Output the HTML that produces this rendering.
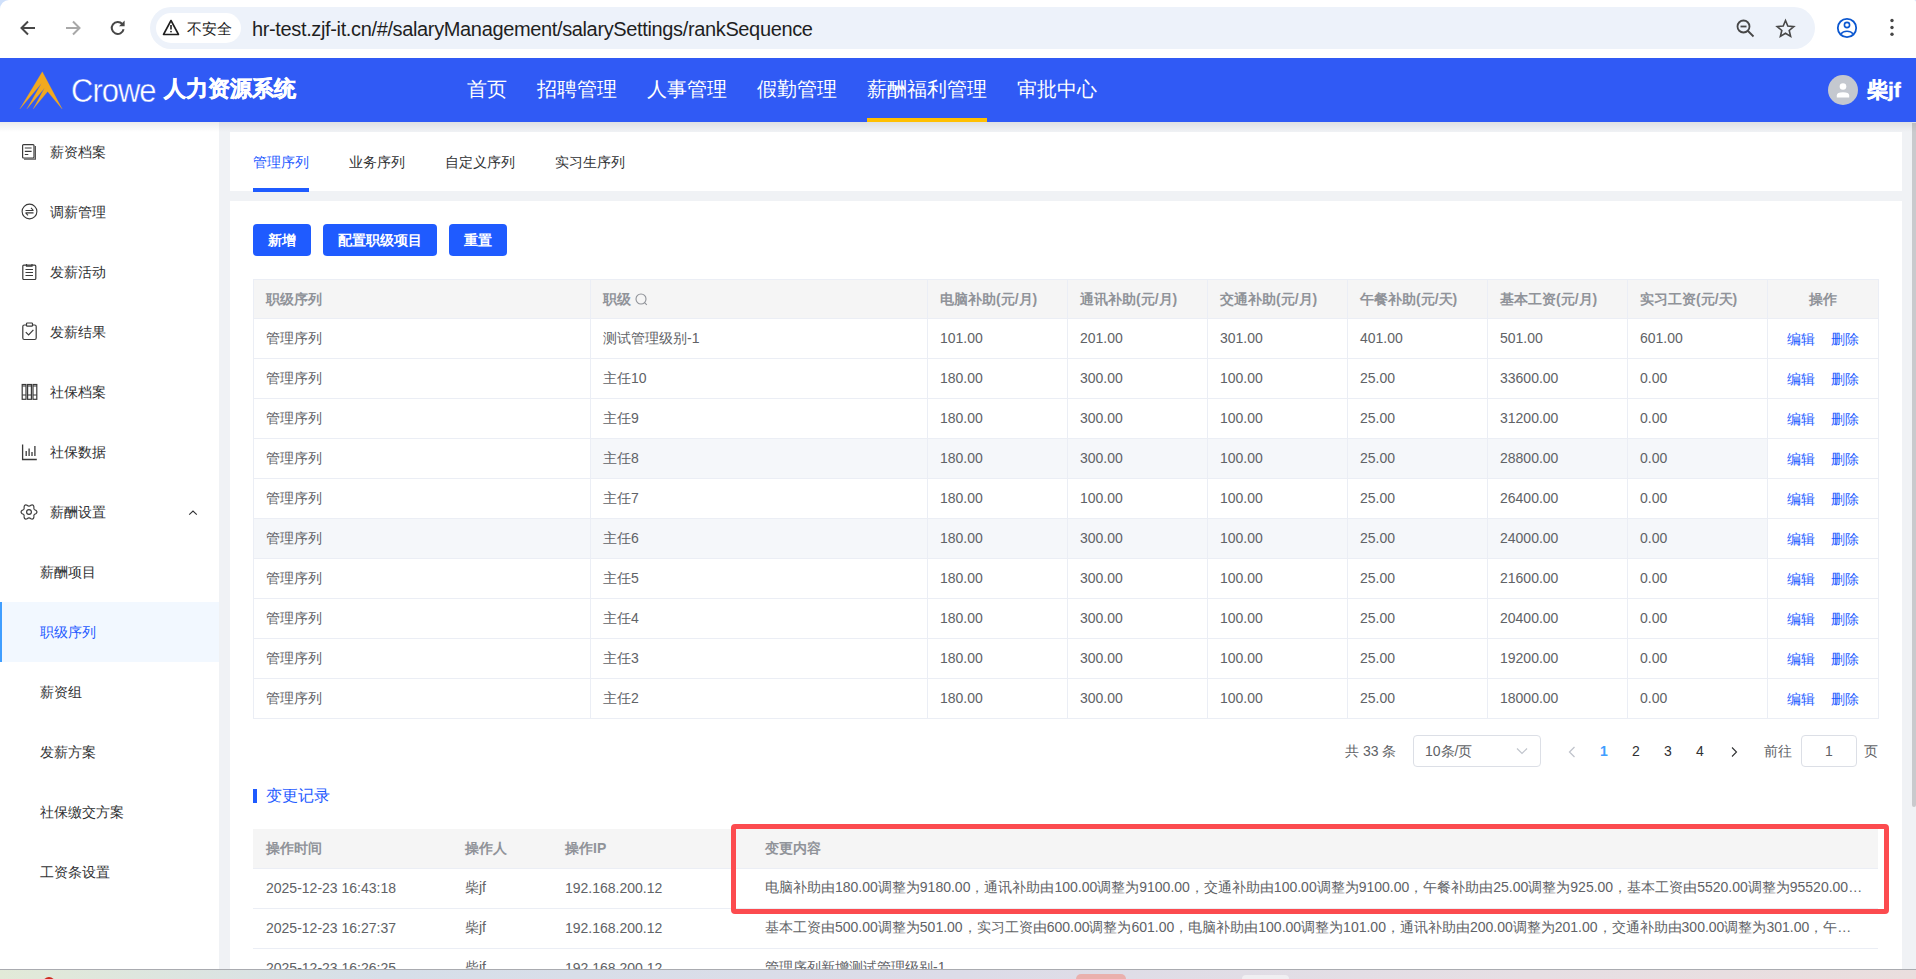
<!DOCTYPE html>
<html><head><meta charset="utf-8">
<style>
*{box-sizing:border-box;margin:0;padding:0}
html,body{width:1916px;height:979px;overflow:hidden;background:#f0f2f5;font-family:"Liberation Sans",sans-serif;font-size:14px;color:#606266}
.abs{position:absolute}
#chrome{position:absolute;left:0;top:0;width:1916px;height:58px;background:#fff;border-top-left-radius:9px;border-top-right-radius:2px}
#pill{position:absolute;left:150px;top:7px;width:1665px;height:42px;border-radius:21px;background:#edf2fa}
#chip{position:absolute;left:6px;top:6px;width:85px;height:30px;border-radius:15px;background:#fff}
#url{position:absolute;left:102px;top:1px;line-height:42px;font-size:20px;color:#1f1f1f;letter-spacing:-0.36px}
#header{position:absolute;left:0;top:58px;width:1916px;height:64px;background:#305af5}
.nav{position:absolute;top:0;height:64px;line-height:62px;font-size:20px;color:#fff}
#sidebar{position:absolute;left:0;top:122px;width:219px;height:857px;background:#fff}
.mi{position:absolute;left:0;width:219px;height:60px;line-height:60px;font-size:14px;color:#303133}
.mi .t{position:absolute;left:50px;top:0}
.mi svg{position:absolute;left:20px;top:22px}
.si{position:absolute;left:0;width:219px;height:60px;line-height:60px;font-size:14px;color:#303133}
.si .t{position:absolute;left:40px;top:0}
#tabs{position:absolute;left:230px;top:132px;width:1672px;height:59px;background:#fff;z-index:1}
.tab{position:absolute;top:0;height:59px;line-height:60px;font-size:14px;color:#303133}
#card{position:absolute;left:230px;top:201px;width:1672px;height:778px;background:#fff}
.btn{position:absolute;top:23px;height:32px;line-height:32px;background:#1f5bff;color:#fff;border-radius:4px;font-size:14px;text-align:center;font-weight:bold}
table{border-collapse:collapse;table-layout:fixed}
#scroll{position:absolute;left:1912px;top:123px;width:4px;height:684px;background:#c9cacd;border-radius:0 0 2px 2px}
#taskbar{position:absolute;left:0;top:969px;width:1916px;height:10px;background:linear-gradient(90deg,#e2ead8 0%,#d6dfe9 20%,#dcdce8 50%,#e6dfe4 80%,#eadede 100%);border-top:1px solid #a9abb0}
#mt th,#mt td,#ct th,#ct td{height:40px;padding:0 12px;text-align:left;font-size:14px;white-space:nowrap;overflow:hidden;text-overflow:ellipsis;position:relative}
#mt{border-left:1px solid #ebeef5;border-top:1px solid #ebeef5}
#mt th,#mt td{border-right:1px solid #ebeef5;border-bottom:1px solid #ebeef5}
#mt th,#ct th{background:#f5f5f5;color:#909399;font-weight:bold;height:39px;padding-top:1px}
#mt td{color:#606266}
#mt td.op{text-align:center;padding:0}
#mt td.op a{color:#1d5bff;margin:0 8px;position:relative;top:1px}
#mt tr.r3 td{background:#f5f7fa}
#mt tr.r3 td:first-child{background:#fff}
#mt tr.r5 td{background:#f5f7fa}
#mt tr td.op{background:#fff !important}
#ct th,#ct td{border-bottom:1px solid #ebeef5;padding-left:13px}
#ct td{color:#606266}
.n{position:relative;top:-1px}
.pg{position:absolute;top:536px;width:32px;text-align:center;line-height:28px;font-size:14px;color:#303133}
</style></head><body>
<div class="abs" style="left:0;top:0;width:14px;height:14px;background:#cfe0fb"></div><div class="abs" style="left:1906px;top:0;width:10px;height:6px;background:#cfe0fb"></div>
<div id="chrome">
  <!-- back -->
  <svg class="abs" style="left:18px;top:17px" width="20" height="22" viewBox="0 0 20 22"><path d="M17 11H4M10 4.5L3.5 11 10 17.5" fill="none" stroke="#474747" stroke-width="2"/></svg>
  <svg class="abs" style="left:63px;top:17px" width="20" height="22" viewBox="0 0 20 22"><path d="M3 11h13M10 4.5L16.5 11 10 17.5" fill="none" stroke="#a8a8a8" stroke-width="2"/></svg>
  <svg class="abs" style="left:108px;top:18px" width="20" height="20" viewBox="0 0 20 20"><path d="M15.6 11.2A6 6 0 1 1 14.3 6" fill="none" stroke="#474747" stroke-width="2"/><path d="M16.6 2.6v5.6H11z" fill="#474747"/></svg>
  <div id="pill">
    <div id="chip">
      <svg class="abs" style="left:6px;top:6px" width="18" height="17" viewBox="0 0 18 17"><path d="M9 1.5L16.5 15.5H1.5Z" fill="none" stroke="#1f1f1f" stroke-width="1.6" stroke-linejoin="round"/><path d="M9 6v4.5" stroke="#1f1f1f" stroke-width="1.6"/><circle cx="9" cy="12.6" r="0.9" fill="#1f1f1f"/></svg>
      <span class="abs" style="left:31px;top:1px;line-height:30px;font-size:15px;color:#1f1f1f">不安全</span>
    </div>
    <div id="url">hr-test.zjf-it.cn/#/salaryManagement/salarySettings/rankSequence</div>
  </div>
  <svg class="abs" style="left:1735px;top:18px" width="22" height="22" viewBox="0 0 22 22"><circle cx="8.5" cy="8.5" r="6" fill="none" stroke="#474747" stroke-width="1.8"/><path d="M5.5 8.5h6" stroke="#474747" stroke-width="1.8"/><path d="M13 13l5.5 5.5" stroke="#474747" stroke-width="1.8"/></svg>
  <svg class="abs" style="left:1775px;top:18px" width="22" height="22" viewBox="0 0 22 22"><path d="M10.5 2.5l2.3 5.6 6 .5-4.6 3.9 1.4 5.9-5.1-3.2-5.1 3.2 1.4-5.9-4.6-3.9 6-.5z" fill="none" stroke="#474747" stroke-width="1.6" stroke-linejoin="miter"/></svg>
  <svg class="abs" style="left:1836px;top:17px" width="22" height="22" viewBox="0 0 22 22"><circle cx="11" cy="11" r="9.2" fill="none" stroke="#0b57d0" stroke-width="1.8"/><circle cx="11" cy="8" r="2.6" fill="none" stroke="#0b57d0" stroke-width="1.6"/><path d="M5 16.8c1.5-2 3.5-2.6 6-2.6s4.5.6 6 2.6" fill="none" stroke="#0b57d0" stroke-width="1.6"/></svg>
  <svg class="abs" style="left:1888px;top:17px" width="8" height="22" viewBox="0 0 8 22"><circle cx="4" cy="3.5" r="1.7" fill="#474747"/><circle cx="4" cy="10.5" r="1.7" fill="#474747"/><circle cx="4" cy="17.3" r="1.7" fill="#474747"/></svg>
</div>
<div id="header">
  <svg class="abs" style="left:15px;top:7px" width="55" height="50" viewBox="0 0 55 50"><path d="M27.3 6.8L47 43.8L32.6 26.4L18.3 43.8L29.6 23L12 43.8L26.6 18.3L5 43.8Z" fill="#f2a91f" stroke="#f2a91f" stroke-width="0.3" stroke-linejoin="round"/></svg>
  <div class="abs" style="left:71px;top:2px;line-height:64px;font-size:31px;color:#fff;letter-spacing:-1px;-webkit-text-stroke:0.4px #305af5;transform:scaleY(1.1);transform-origin:0 40px">Crowe</div>
  <div class="abs" style="left:164px;top:0;line-height:62px;font-size:22px;color:#fff;font-weight:bold;-webkit-text-stroke:0.5px #fff">人力资源系统</div>
  <div class="nav" style="left:467px">首页</div>
  <div class="nav" style="left:537px">招聘管理</div>
  <div class="nav" style="left:647px">人事管理</div>
  <div class="nav" style="left:757px">假勤管理</div>
  <div class="nav" style="left:867px">薪酬福利管理</div>
  <div class="abs" style="left:867px;top:60px;width:120px;height:4px;background:#ffbf00"></div>
  <div class="nav" style="left:1017px">审批中心</div>
  <div class="abs" style="left:1828px;top:17px;width:30px;height:30px;border-radius:15px;background:#c4c8cf"></div>
  <svg class="abs" style="left:1828px;top:17px" width="30" height="30" viewBox="0 0 30 30"><circle cx="15" cy="11.5" r="3.3" fill="#fff"/><path d="M8.8 22.6v-2.2c0-2 2.2-3.2 6.2-3.2s6.2 1.2 6.2 3.2v2.2z" fill="#fff"/></svg>
  <div class="abs" style="left:1867px;top:1px;line-height:62px;font-size:21px;color:#fff;font-weight:bold;-webkit-text-stroke:0.4px #fff">柴jf</div>
</div>
<div id="sidebar">
  <div class="mi" style="top:0"><svg style="left:21px;top:21px" width="17" height="18" viewBox="0 0 17 18"><rect x="1.6" y="1.6" width="11.4" height="13.4" rx="1" fill="none" stroke="#3a3a3a" stroke-width="1.2"/><path d="M14.4 3v13.2H3" fill="none" stroke="#555" stroke-width="1.2"/><path d="M3.8 5h6.8M3.8 8.3h6.8M3.8 11.5h3.5" stroke="#3a3a3a" stroke-width="1.2"/></svg><span class="t">薪资档案</span></div>
  <div class="mi" style="top:60px"><svg style="left:20.5px;top:21.3px" width="17" height="17" viewBox="0 0 17 17"><circle cx="8.5" cy="8.5" r="7.4" fill="none" stroke="#3a3a3a" stroke-width="1.1"/><path d="M4.5 7.5h8M10 4.8l2.4 2.7M12.5 9.9h-8M4.6 9.9l2.4 2.4" fill="none" stroke="#3a3a3a" stroke-width="1.1"/></svg><span class="t">调薪管理</span></div>
  <div class="mi" style="top:120px"><svg style="left:21px;top:21px" width="17" height="18" viewBox="0 0 17 18"><rect x="1.8" y="2.2" width="13" height="14.3" rx="1" fill="none" stroke="#3a3a3a" stroke-width="1.2"/><path d="M5.5 1v2.2h5.5V1" fill="none" stroke="#3a3a3a" stroke-width="1.2"/><path d="M4.5 6.5h7.5M4.5 9.5h7.5M4.5 12.5h7.5" stroke="#3a3a3a" stroke-width="1.2"/></svg><span class="t">发薪活动</span></div>
  <div class="mi" style="top:180px"><svg style="left:21px;top:20px" width="17" height="19" viewBox="0 0 17 19"><rect x="1.8" y="3" width="13.4" height="14.5" rx="1.5" fill="none" stroke="#3a3a3a" stroke-width="1.2"/><rect x="5.5" y="1" width="6" height="3.2" rx="0.8" fill="#fff" stroke="#3a3a3a" stroke-width="1.2"/><path d="M4.8 10.2l2.8 2.8 4.8-5.2" fill="none" stroke="#3a3a3a" stroke-width="1.2"/></svg><span class="t">发薪结果</span></div>
  <div class="mi" style="top:240px"><svg style="left:21px;top:21px" width="17" height="18" viewBox="0 0 17 18"><rect x="1.2" y="1.5" width="3.8" height="14.8" fill="none" stroke="#3a3a3a" stroke-width="1.2"/><rect x="6.6" y="1.5" width="3.8" height="14.8" fill="none" stroke="#3a3a3a" stroke-width="1.2"/><rect x="12" y="1.5" width="3.8" height="14.8" fill="none" stroke="#3a3a3a" stroke-width="1.2"/><path d="M1.2 3h3.8M1.2 12h3.8M6.6 3h3.8M6.6 12h3.8M12 3h3.8M12 12h3.8" stroke="#3a3a3a" stroke-width="1.1"/></svg><span class="t">社保档案</span></div>
  <div class="mi" style="top:300px"><svg style="left:21px;top:21px" width="17" height="18" viewBox="0 0 17 18"><path d="M1.6 1.5v15h14.2" fill="none" stroke="#3a3a3a" stroke-width="1.3"/><path d="M5.2 13V8M8.1 13V5.5M11 13V9M13.9 13V3" stroke="#3a3a3a" stroke-width="1.3"/></svg><span class="t">社保数据</span></div>
  <div class="mi" style="top:360px"><svg style="left:20px;top:20.5px" width="18" height="18" viewBox="0 0 18 18"><path d="M16.95 9.00 L16.85 8.49 L16.58 8.00 L16.16 7.58 L15.66 7.21 L15.15 6.91 L14.69 6.64 L14.32 6.38 L14.07 6.08 L13.93 5.71 L13.89 5.25 L13.89 4.72 L13.88 4.12 L13.81 3.51 L13.65 2.94 L13.37 2.46 L12.98 2.12 L12.48 1.94 L11.92 1.94 L11.35 2.09 L10.79 2.34 L10.27 2.63 L9.80 2.90 L9.39 3.08 L9.00 3.15 L8.61 3.08 L8.20 2.90 L7.73 2.63 L7.21 2.34 L6.65 2.09 L6.08 1.94 L5.52 1.94 L5.03 2.12 L4.63 2.46 L4.35 2.94 L4.19 3.51 L4.12 4.12 L4.11 4.72 L4.11 5.25 L4.07 5.71 L3.93 6.08 L3.68 6.38 L3.31 6.64 L2.85 6.91 L2.34 7.21 L1.84 7.58 L1.42 8.00 L1.15 8.49 L1.05 9.00 L1.15 9.51 L1.42 10.00 L1.84 10.42 L2.34 10.79 L2.85 11.09 L3.31 11.36 L3.68 11.62 L3.93 11.92 L4.07 12.29 L4.11 12.75 L4.11 13.28 L4.12 13.88 L4.19 14.49 L4.35 15.06 L4.63 15.54 L5.02 15.88 L5.52 16.06 L6.08 16.06 L6.65 15.91 L7.21 15.66 L7.73 15.37 L8.20 15.10 L8.61 14.92 L9.00 14.85 L9.39 14.92 L9.80 15.10 L10.27 15.37 L10.79 15.66 L11.35 15.91 L11.92 16.06 L12.48 16.06 L12.98 15.88 L13.37 15.54 L13.65 15.06 L13.81 14.49 L13.88 13.88 L13.89 13.28 L13.89 12.75 L13.93 12.29 L14.07 11.93 L14.32 11.62 L14.69 11.36 L15.15 11.09 L15.66 10.79 L16.16 10.42 L16.58 10.00 L16.85 9.51Z" fill="none" stroke="#3a3a3a" stroke-width="1.15" stroke-linejoin="round"/><circle cx="9" cy="9" r="2.4" fill="none" stroke="#3a3a3a" stroke-width="1.15"/></svg><span class="t">薪酬设置</span>
    <svg style="left:187px;top:26.5px" width="12" height="8" viewBox="0 0 12 8"><path d="M2.2 5.6L6 2l3.8 3.6" fill="none" stroke="#303133" stroke-width="1.1"/></svg></div>
  <div class="si" style="top:420px"><span class="t">薪酬项目</span></div>
  <div class="si" style="top:480px;background:#f2f8ff"><div style="position:absolute;left:0;top:0;width:2px;height:60px;background:#409eff"></div><span class="t" style="color:#1f5bff">职级序列</span></div>
  <div class="si" style="top:540px"><span class="t">薪资组</span></div>
  <div class="si" style="top:600px"><span class="t">发薪方案</span></div>
  <div class="si" style="top:660px"><span class="t">社保缴交方案</span></div>
  <div class="si" style="top:720px"><span class="t">工资条设置</span></div>
</div>
<div id="tabs">
  <div class="tab" style="left:23px;color:#1f5bff">管理序列</div>
  <div class="abs" style="left:23px;top:56px;width:56px;height:4px;background:#1f5bff"></div>
  <div class="tab" style="left:119px">业务序列</div>
  <div class="tab" style="left:215px">自定义序列</div>
  <div class="tab" style="left:325px">实习生序列</div>
</div>
<div id="card">
  <div class="btn" style="left:23px;width:58px">新增</div>
  <div class="btn" style="left:93px;width:114px">配置职级项目</div>
  <div class="btn" style="left:219px;width:58px">重置</div>
<table id="mt" style="position:absolute;left:23px;top:78px;width:1625px">
<colgroup>
<col style="width:337px">
<col style="width:337px">
<col style="width:140px">
<col style="width:140px">
<col style="width:140px">
<col style="width:140px">
<col style="width:140px">
<col style="width:140px">
<col style="width:111px">
</colgroup><tr class="h">
<th>职级序列</th>
<th>职级<svg style="position:absolute;left:44px;top:13px" width="13" height="13" viewBox="0 0 13 13"><circle cx="6" cy="6" r="5" fill="none" stroke="#909399" stroke-width="1.1"/><path d="M9.6 9.6l2.2 2.2" stroke="#909399" stroke-width="1.1"/></svg></th>
<th>电脑补助(元/月)</th>
<th>通讯补助(元/月)</th>
<th>交通补助(元/月)</th>
<th>午餐补助(元/天)</th>
<th>基本工资(元/月)</th>
<th>实习工资(元/天)</th>
<th style="text-align:center">操作</th>
</tr>
<tr class="r0">
<td>管理序列</td>
<td>测试管理级别-1</td>
<td><span class="n">101.00</span></td>
<td><span class="n">201.00</span></td>
<td><span class="n">301.00</span></td>
<td><span class="n">401.00</span></td>
<td><span class="n">501.00</span></td>
<td><span class="n">601.00</span></td>
<td class="op"><a>编辑</a><a>删除</a></td></tr>
<tr class="r1">
<td>管理序列</td>
<td>主任10</td>
<td><span class="n">180.00</span></td>
<td><span class="n">300.00</span></td>
<td><span class="n">100.00</span></td>
<td><span class="n">25.00</span></td>
<td><span class="n">33600.00</span></td>
<td><span class="n">0.00</span></td>
<td class="op"><a>编辑</a><a>删除</a></td></tr>
<tr class="r2">
<td>管理序列</td>
<td>主任9</td>
<td><span class="n">180.00</span></td>
<td><span class="n">300.00</span></td>
<td><span class="n">100.00</span></td>
<td><span class="n">25.00</span></td>
<td><span class="n">31200.00</span></td>
<td><span class="n">0.00</span></td>
<td class="op"><a>编辑</a><a>删除</a></td></tr>
<tr class="r3">
<td>管理序列</td>
<td>主任8</td>
<td><span class="n">180.00</span></td>
<td><span class="n">300.00</span></td>
<td><span class="n">100.00</span></td>
<td><span class="n">25.00</span></td>
<td><span class="n">28800.00</span></td>
<td><span class="n">0.00</span></td>
<td class="op"><a>编辑</a><a>删除</a></td></tr>
<tr class="r4">
<td>管理序列</td>
<td>主任7</td>
<td><span class="n">180.00</span></td>
<td><span class="n">100.00</span></td>
<td><span class="n">100.00</span></td>
<td><span class="n">25.00</span></td>
<td><span class="n">26400.00</span></td>
<td><span class="n">0.00</span></td>
<td class="op"><a>编辑</a><a>删除</a></td></tr>
<tr class="r5">
<td>管理序列</td>
<td>主任6</td>
<td><span class="n">180.00</span></td>
<td><span class="n">300.00</span></td>
<td><span class="n">100.00</span></td>
<td><span class="n">25.00</span></td>
<td><span class="n">24000.00</span></td>
<td><span class="n">0.00</span></td>
<td class="op"><a>编辑</a><a>删除</a></td></tr>
<tr class="r6">
<td>管理序列</td>
<td>主任5</td>
<td><span class="n">180.00</span></td>
<td><span class="n">300.00</span></td>
<td><span class="n">100.00</span></td>
<td><span class="n">25.00</span></td>
<td><span class="n">21600.00</span></td>
<td><span class="n">0.00</span></td>
<td class="op"><a>编辑</a><a>删除</a></td></tr>
<tr class="r7">
<td>管理序列</td>
<td>主任4</td>
<td><span class="n">180.00</span></td>
<td><span class="n">300.00</span></td>
<td><span class="n">100.00</span></td>
<td><span class="n">25.00</span></td>
<td><span class="n">20400.00</span></td>
<td><span class="n">0.00</span></td>
<td class="op"><a>编辑</a><a>删除</a></td></tr>
<tr class="r8">
<td>管理序列</td>
<td>主任3</td>
<td><span class="n">180.00</span></td>
<td><span class="n">300.00</span></td>
<td><span class="n">100.00</span></td>
<td><span class="n">25.00</span></td>
<td><span class="n">19200.00</span></td>
<td><span class="n">0.00</span></td>
<td class="op"><a>编辑</a><a>删除</a></td></tr>
<tr class="r9">
<td>管理序列</td>
<td>主任2</td>
<td><span class="n">180.00</span></td>
<td><span class="n">300.00</span></td>
<td><span class="n">100.00</span></td>
<td><span class="n">25.00</span></td>
<td><span class="n">18000.00</span></td>
<td><span class="n">0.00</span></td>
<td class="op"><a>编辑</a><a>删除</a></td></tr>
</table>
<div class="abs" style="left:1115px;top:536px;line-height:28px;font-size:14px;color:#606266">共 33 条</div>
  <div class="abs" style="left:1183px;top:534px;width:128px;height:32px;border:1px solid #dcdfe6;border-radius:4px">
    <span class="abs" style="left:11px;top:0;line-height:30px;font-size:14px;color:#606266">10条/页</span>
    <svg class="abs" style="left:102px;top:11px" width="12" height="8" viewBox="0 0 12 8"><path d="M1 1.5l5 5 5-5" fill="none" stroke="#c0c4cc" stroke-width="1.2"/></svg>
  </div>
  <svg class="abs" style="left:1338px;top:545px" width="8" height="12" viewBox="0 0 8 12"><path d="M6.5 1L1.5 6l5 5" fill="none" stroke="#c0c4cc" stroke-width="1.3"/></svg>
  <div class="pg" style="left:1358px;color:#409eff;font-weight:bold">1</div>
  <div class="pg" style="left:1390px">2</div>
  <div class="pg" style="left:1422px">3</div>
  <div class="pg" style="left:1454px">4</div>
  <svg class="abs" style="left:1500px;top:545px" width="8" height="12" viewBox="0 0 8 12"><path d="M2 1.5l4.5 4.5-4.5 4.5" fill="none" stroke="#303133" stroke-width="1.1"/></svg>
  <div class="abs" style="left:1534px;top:536px;line-height:28px;font-size:14px;color:#606266">前往</div>
  <div class="abs" style="left:1571px;top:534px;width:56px;height:32px;border:1px solid #dcdfe6;border-radius:4px;text-align:center;line-height:30px;font-size:14px;color:#606266">1</div>
  <div class="abs" style="left:1634px;top:536px;line-height:28px;font-size:14px;color:#606266">页</div>
<div class="abs" style="left:23px;top:588px;width:4px;height:14px;background:#1f5bff"></div>
  <div class="abs" style="left:36px;top:584px;line-height:22px;font-size:16px;color:#1f5bff">变更记录</div>
<table id="ct" style="position:absolute;left:23px;top:628px;width:1625px">
<colgroup><col style="width:199px"><col style="width:100px"><col style="width:200px"><col style="width:1126px"></colgroup>
<tr class="h"><th>操作时间</th><th>操作人</th><th>操作IP</th><th>变更内容</th></tr>
<tr><td>2025-12-23 16:43:18</td><td>柴jf</td><td>192.168.200.12</td><td>电脑补助由180.00调整为9180.00，通讯补助由100.00调整为9100.00，交通补助由100.00调整为9100.00，午餐补助由25.00调整为925.00，基本工资由5520.00调整为95520.00，实习工资由0.00调整为90.00</td></tr>
<tr><td>2025-12-23 16:27:37</td><td>柴jf</td><td>192.168.200.12</td><td>基本工资由500.00调整为501.00，实习工资由600.00调整为601.00，电脑补助由100.00调整为101.00，通讯补助由200.00调整为201.00，交通补助由300.00调整为301.00，午…</td></tr>
<tr><td>2025-12-23 16:26:25</td><td>柴jf</td><td>192.168.200.12</td><td>管理序列新增测试管理级别-1</td></tr>
</table>
<div class="abs" style="left:501px;top:623px;width:1158px;height:90px;border:5px solid #fc4b4f;border-radius:4px"></div>
</div>
<div id="scroll"></div>
<div class="abs" style="left:0;top:122px;width:1916px;height:10px;background:linear-gradient(rgba(0,0,0,0.075),rgba(0,0,0,0))"></div>
<div id="taskbar"></div>
<div class="abs" style="left:43px;top:977px;width:12px;height:12px;border-radius:6px;background:#cf2a1e"></div>
<div class="abs" style="left:1076px;top:974px;width:50px;height:10px;border-radius:5px;background:#eab0ad"></div>
<div class="abs" style="left:1242px;top:975px;width:47px;height:10px;border-radius:4px;background:#f0eff2"></div>
</body></html>
